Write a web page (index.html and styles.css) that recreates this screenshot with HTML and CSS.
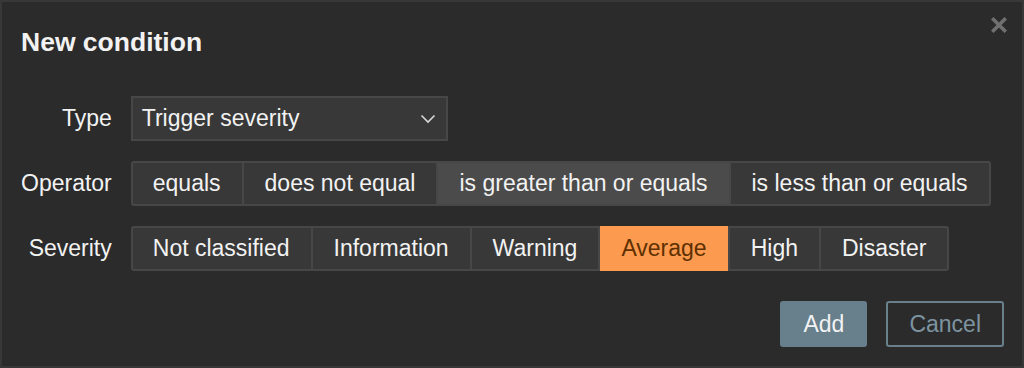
FILE: index.html
```html
<!DOCTYPE html>
<html lang="en">
<head>
  <meta charset="UTF-8" />
  <meta name="viewport" content="width=device-width, initial-scale=1.0"/>
  <title>New condition</title>
  <link rel="stylesheet" href="styles.css">
</head>
<body>
  <div class="dialog">
    <div class="dialog-header">
      <h2 class="dialog-title">New condition</h2>
      <button class="btn-close" title="Close">
        <svg width="16" height="16" viewBox="0 0 16 16">
          <path d="M2.5 2.5 L13.5 13.5 M13.5 2.5 L2.5 13.5" stroke="#707070" stroke-width="3.6" stroke-linecap="square" fill="none"/>
        </svg>
      </button>
    </div>

    <form class="form-grid">
      <label class="form-label">Type</label>
      <div class="form-field">
        <div class="select">
          <span>Trigger severity</span>
          <svg class="chevron" width="16" height="10" viewBox="0 0 16 10">
            <path d="M1.5 1.5 L8 8 L14.5 1.5" stroke="#d8d8d8" stroke-width="1.6" fill="none"/>
          </svg>
        </div>
      </div>

      <label class="form-label">Operator</label>
      <div class="form-field">
        <div class="radio-list">
          <span class="radio-item">equals</span>
          <span class="radio-item">does not equal</span>
          <span class="radio-item is-checked">is greater than or equals</span>
          <span class="radio-item">is less than or equals</span>
        </div>
      </div>

      <label class="form-label">Severity</label>
      <div class="form-field">
        <div class="radio-list">
          <span class="radio-item">Not classified</span>
          <span class="radio-item">Information</span>
          <span class="radio-item">Warning</span>
          <span class="radio-item is-average">Average</span>
          <span class="radio-item">High</span>
          <span class="radio-item">Disaster</span>
        </div>
      </div>
    </form>

    <div class="dialog-footer">
      <button class="btn btn-primary">Add</button>
      <button class="btn btn-alt">Cancel</button>
    </div>
  </div>
</body>
</html>
```

FILE: styles.css
```css
* {
  box-sizing: border-box;
}

body {
  margin: 0;
  background: #2b2b2b;
  font-family: 'Liberation Sans', Arial, sans-serif;
  color: #f2f2f2;
}

.dialog {
  position: relative;
  width: 1024px;
  height: 368px;
  background: #2b2b2b;
  border: 2px solid #383838;
  padding: 0 18px 0 19px;
}

.dialog-header {
  padding-top: 25px;
}

.dialog-title {
  margin: 0;
  font-size: 26.5px;
  line-height: 30px;
  font-weight: bold;
  color: #f2f2f2;
}

.btn-close {
  position: absolute;
  top: 12px;
  right: 12px;
  width: 22px;
  height: 22px;
  padding: 0;
  border: none;
  background: none;
  display: flex;
  align-items: center;
  justify-content: center;
  cursor: pointer;
}

.form-grid {
  margin-top: 39px;
  display: grid;
  grid-template-columns: auto 1fr;
  column-gap: 19px;
  row-gap: 20px;
  align-items: center;
}

.form-label {
  text-align: right;
  font-size: 23px;
}

.form-field {
  display: flex;
}

.select {
  width: 317px;
  height: 45px;
  background: #383838;
  border: 2px solid #474747;
  display: flex;
  align-items: center;
  justify-content: space-between;
  padding: 0 10px 0 9px;
  font-size: 23px;
}

.radio-list {
  display: inline-flex;
  height: 45px;
  background: #383838;
  border: 2px solid #474747;
  border-radius: 3px;
}

.radio-item {
  padding: 0 21px;
  line-height: 41px;
  font-size: 23px;
  white-space: nowrap;
  border-left: 2px solid #474747;
}

.radio-item:first-child {
  border-left: none;
  padding-left: 20px;
}

.radio-item.is-checked {
  background: #4b4b4b;
}

.radio-item.is-average {
  background: #fc9b50;
  color: #5e3000;
  margin: -2px 0;
  line-height: 45px;
}

.dialog-footer {
  margin-top: 30px;
  display: flex;
  justify-content: flex-end;
  gap: 19px;
}

.btn {
  height: 46px;
  padding: 0 21px;
  border-radius: 3px;
  font-family: 'Liberation Sans', Arial, sans-serif;
  font-size: 23px;
  cursor: pointer;
}

.btn-primary {
  background: #687f8c;
  border: 2px solid #687f8c;
  color: #f2f2f2;
}

.btn-alt {
  background: transparent;
  border: 2px solid #687f8c;
  color: #7d94a0;
}
```
